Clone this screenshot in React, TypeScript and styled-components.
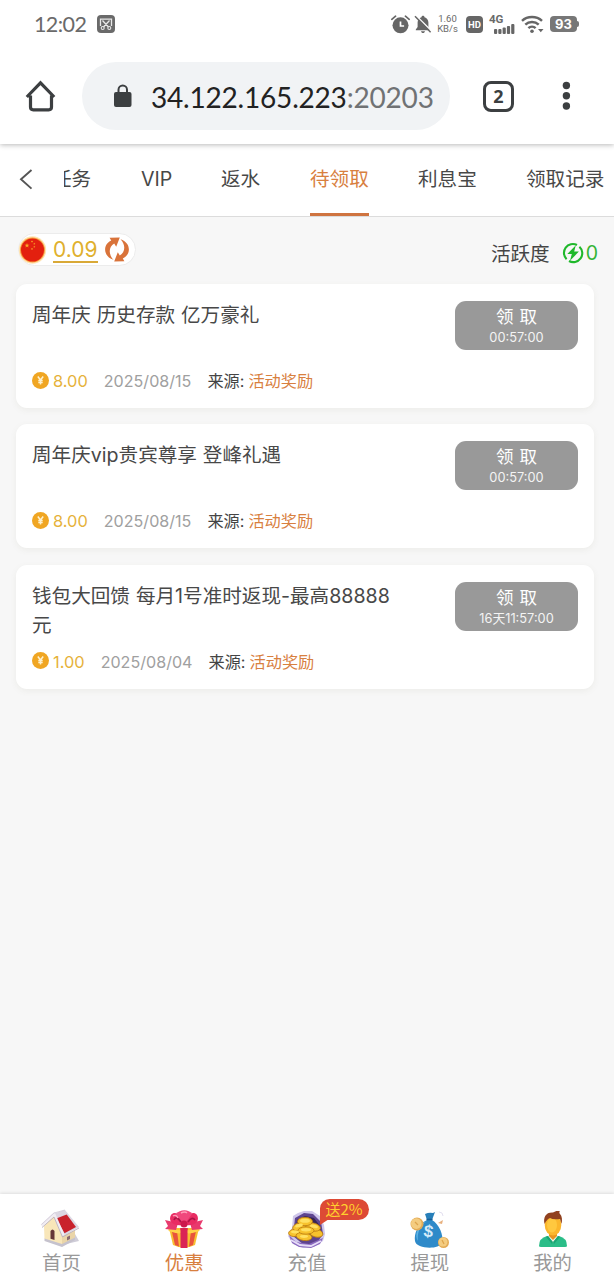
import React from 'react';
import styled, { createGlobalStyle } from 'styled-components';

const Global = createGlobalStyle`
  * { box-sizing: border-box; }
  body {
    margin: 0;
    background: #f7f7f7;
    font-family: Inter, "Noto Sans CJK SC", sans-serif;
    color: #444;
  }
  svg { display: block; flex: none; overflow: visible; }
`;

const Page = styled.div`
  width: 614px;
  height: 1280px;
  display: flex;
  flex-direction: column;
  overflow: hidden;
  background: #f7f7f7;
  white-space: nowrap;
`;

/* ---------- status bar ---------- */
const StatusBar = styled.div`
  flex: none;
  height: 48px;
  padding: 0 34px;
  display: flex;
  align-items: center;
  background: #fff;
  color: #6a6a6a;
  position: relative;
  z-index: 2;
`;
const Clock = styled.span`
  font: 400 21.5px/24px Lato, sans-serif;
  letter-spacing: -0.6px;
  width: 63px;
`;
const StatusIcons = styled.div`
  margin-left: auto;
  display: flex;
  align-items: center;
`;
const Speed = styled.div`
  width: 21px;
  margin: 0 8px 0 6px;
  font: 400 9.5px/10px Roboto, sans-serif;
  display: flex;
  flex-direction: column;
  align-items: center;
`;
const HdTag = styled.div`
  width: 17px;
  height: 17px;
  border-radius: 4px;
  background: #666;
  color: #fff;
  font: 700 9.5px/17px Roboto, sans-serif;
  text-align: center;
  margin-right: 6px;
`;
const Signal = styled.div`
  width: 27px;
  height: 19px;
  margin-right: 5px;
  font: 700 11.5px/9px Roboto, sans-serif;
  display: flex;
  flex-direction: column;
`;
const Battery = styled.div`
  width: 27px;
  height: 16px;
  margin-left: 6px;
  margin-right: 3px;
  border-radius: 4px;
  background: #777;
  color: #fff;
  font: 700 13px/16px Inter, sans-serif;
  text-align: center;
  position: relative;
  &::after {
    content: '';
    position: absolute;
    right: -2px;
    top: 5px;
    width: 2px;
    height: 6px;
    background: #777;
    border-radius: 0 2px 2px 0;
  }
`;

/* ---------- browser bar ---------- */
const BrowserBar = styled.div`
  flex: none;
  height: 96px;
  padding-left: 25px;
  display: flex;
  align-items: center;
  background: #fff;
  position: relative;
  z-index: 1;
  box-shadow: 0 1px 5px rgba(0, 0, 0, 0.28);
`;
const Address = styled.div`
  width: 368px;
  height: 68px;
  margin-left: 25px;
  padding-left: 32px;
  border-radius: 34px;
  background: #f1f3f5;
  display: flex;
  align-items: center;
`;
const Url = styled.div`
  margin-left: 19px;
  padding-top: 1px;
  font: 400 28px/36px Lato, sans-serif;
  letter-spacing: -0.2px;
  color: #222;
`;
const Port = styled.span`
  color: #707274;
`;
const TabCount = styled.div`
  width: 31px;
  height: 31px;
  margin-left: 33px;
  border: 3px solid #3c3f41;
  border-radius: 8px;
  color: #3c3f41;
  font: 700 18px/25px "Noto Sans", sans-serif;
  text-align: center;
`;

/* ---------- tabs ---------- */
const Tabs = styled.nav`
  flex: none;
  height: 73px;
  padding-left: 19px;
  display: flex;
  background: #fff;
  border-bottom: 1px solid #dcdcdc;
`;
const Back = styled.div`
  width: 45px;
  padding-top: 25px;
`;
const TabScroller = styled.div`
  flex: 1;
  overflow: hidden;
`;
const TabList = styled.div`
  display: flex;
  gap: 49px;
  height: 72px;
  margin-left: -12px;
`;
const Tab = styled.div<{ $active?: boolean; $w: number }>`
  flex: none;
  width: ${(p) => p.$w}px;
  height: 72px;
  font-size: 19.6px;
  line-height: 30px;
  padding-top: 20px;
  color: ${(p) => (p.$active ? '#d8803f' : '#484848')};
  border-bottom: 3px solid ${(p) => (p.$active ? '#cf7440' : 'transparent')};
`;

/* ---------- summary ---------- */
const Summary = styled.div`
  flex: none;
  height: 67px;
  padding: 0 16px 0 18px;
  display: flex;
  justify-content: space-between;
  align-items: flex-start;
`;
const Balance = styled.div`
  width: 118px;
  height: 33px;
  margin-top: 16px;
  border: 1px solid #ececec;
  border-radius: 17px;
  background: #fff;
  display: flex;
  align-items: center;
`;
const BalanceValue = styled.span`
  width: 45px;
  height: 27px;
  margin: 0 7px 0 6px;
  font-size: 21px;
  line-height: 27px;
  color: #dfb02d;
  border-bottom: 2px solid #d9a937;
`;
const Activity = styled.div`
  margin-top: 20px;
  display: flex;
  align-items: center;
  font-size: 19.6px;
  line-height: 30px;
`;
const ActivityLabel = styled.span`
  margin-top: 2px;
`;
const Points = styled.span`
  margin-left: 3px;
  font-size: 19.5px;
  color: #35b435;
`;

/* ---------- cards ---------- */
const CardList = styled.main`
  flex: 1;
  padding: 0 20px 0 16px;
  display: flex;
  flex-direction: column;
  gap: 16.4px;
`;
const Card = styled.article`
  flex: none;
  height: 124px;
  padding: 17px 16px 0;
  border-radius: 11px;
  background: #fff;
  box-shadow: 0 2px 6px rgba(120, 110, 80, 0.08);
  display: flex;
  justify-content: space-between;
`;
const CardTitle = styled.h2`
  margin: 0;
  height: 58px;
  width: 375px;
  font-size: 19.6px;
  font-weight: 400;
  line-height: 29px;
  word-spacing: 0.4px;
  white-space: pre-line;
  color: #484848;
`;
const Meta = styled.div`
  margin-top: 9px;
  display: flex;
  align-items: center;
  font-size: 16.2px;
  line-height: 25px;
`;
const Amount = styled.span`
  margin: 1px 16px 0 4px;
  font-size: 16.4px;
  color: #e6b23a;
`;
const DateText = styled.span`
  margin: 1px 16px 0 0;
  font-size: 16.1px;
  color: #a0a0a0;
`;
const SourceLabel = styled.span`
  margin-top: 1px;
`;
const Source = styled.span`
  margin: 1px 0 0 4px;
  color: #d8803f;
`;
const Claim = styled.button`
  width: 123px;
  height: 49px;
  border: 0;
  padding: 3px 0 0;
  border-radius: 11px;
  background: #999;
  color: #fff;
  font-family: inherit;
  display: flex;
  flex-direction: column;
  align-items: center;
`;
const ClaimLabel = styled.span`
  font-size: 17.5px;
  line-height: 26px;
  word-spacing: 1px;
`;
const Countdown = styled.span`
  font-size: 12.8px;
  line-height: 16px;
  color: #f4f4f4;
`;

/* ---------- bottom nav ---------- */
const BottomNav = styled.footer`
  flex: none;
  height: 86px;
  padding-top: 16px;
  display: grid;
  grid-template-columns: repeat(5, 1fr);
  background: #fff;
  box-shadow: 0 -1px 3px rgba(0, 0, 0, 0.1);
`;
const NavItem = styled.div<{ $active?: boolean }>`
  position: relative;
  display: flex;
  flex-direction: column;
  align-items: center;
  font-size: 19.4px;
  line-height: 26px;
  color: ${(p) => (p.$active ? '#d8803f' : '#999')};
`;
const NavLabel = styled.span`
  margin-top: 0;
`;
const Badge = styled.span`
  position: absolute;
  left: 74px;
  top: -11px;
  width: 49px;
  height: 21px;
  border-radius: 10px 11px 11px 0;
  background: #dd4a35;
  color: #ffcf2e;
  font: 400 15px/20px "Noto Sans CJK SC", sans-serif;
  text-align: center;
  &::after {
    content: '';
    position: absolute;
    left: 0;
    bottom: -5px;
    border-top: 6px solid #dd4a35;
    border-right: 9px solid transparent;
  }
`;

/* ---------- icons ---------- */
const CaptureIcon = () => (
  <svg width="18" height="18" viewBox="0 0 18 18">
    <rect width="18" height="18" rx="4" fill="#6a6a6a" />
    <path d="M3.5 11V4.2h11V11M5.5 5.5l6 6.5M12.500 5.500l-6 6.500" fill="none" stroke="#e8e8e8" strokeWidth="1.300" />
    <circle cx="5.700" cy="13" r="1.500" fill="none" stroke="#e8e8e8" strokeWidth="1.100" />
    <circle cx="12.300" cy="13" r="1.500" fill="none" stroke="#e8e8e8" strokeWidth="1.100" />
  </svg>
);
const AlarmIcon = () => (
  <svg width="19" height="19" viewBox="0 0 19 19">
    <circle cx="9.500" cy="10.300" r="8" fill="#666" />
    <path d="M.8 4.300L4.600 1.200M18.200 4.300L14.400 1.200" stroke="#666" strokeWidth="1.700" strokeLinecap="round" />
    <path d="M9.500 6.500v4.500h3.600" fill="none" stroke="#fff" strokeWidth="1.700" />
  </svg>
);
const BellOffIcon = () => (
  <svg width="16" height="19" viewBox="0 0 16 19" style={{ marginLeft: 5 }}>
    <path d="M8 .8c.9 0 1.500.6 1.500 1.400 2.400.7 3.900 2.700 3.900 5.300v4.600l1.800 2.300v.8H.8v-.8l1.800-2.300V7.500c0-2.600 1.500-4.600 3.900-5.300C6.500 1.400 7.100.8 8 .8zM6 16.200h4c-.2 1.200-1 1.800-2 1.800s-1.800-.6-2-1.800z" fill="#666" />
    <path d="M1.500.9L16.600 16" stroke="#fff" strokeWidth="1.400" />
    <path d="M0 1.300L15.600 17.200" stroke="#666" strokeWidth="1.500" />
  </svg>
);
const BarsIcon = () => (
  <svg width="27" height="10" viewBox="0 0 27 10">
    <g fill="#666">
      <rect x="5" y="5" width="3.200" height="5" rx="1" />
      <rect x="9.300" y="5" width="3.200" height="5" rx="1" />
      <rect x="13.600" y="3.500" width="3.200" height="6.500" rx="1" />
      <rect x="17.900" y="2" width="3.200" height="8" rx="1" />
      <rect x="22.200" y="0" width="3.200" height="10" rx="1" />
    </g>
  </svg>
);
const WifiIcon = () => (
  <svg width="23" height="19" viewBox="0 0 23 19">
    <g fill="none" stroke="#666" strokeWidth="2.500">
      <path d="M1 5.800c5.500-5 14.500-5 20 0" />
      <path d="M4.300 9.600c3.700-3.400 9.700-3.400 13.400 0" />
      <path d="M7.400 13.100c2-1.900 5.200-1.900 7.200 0" />
    </g>
    <circle cx="11" cy="16.200" r="1.800" fill="#666" />
    <path d="M17 14h5.500l-2.700 3.200z" fill="#666" />
  </svg>
);
const HomeIcon = () => (
  <svg width="32" height="32" viewBox="0 0 32 32">
    <path d="M1.800 17L15.500 2.800 29.200 17M5.500 15.500V27q0 2.800 2.800 2.800h15.400q2.800 0 2.800-2.800V15.500" fill="none" stroke="#3c3f41" strokeWidth="3.200" />
  </svg>
);
const LockIcon = () => (
  <svg width="18" height="24" viewBox="0 0 18 24">
    <rect x="0" y="8" width="17.500" height="15" rx="2" fill="#3c3f41" />
    <path d="M4.500 9V5.800a4.250 4.250 0 0 1 8.500 0V9" fill="none" stroke="#3c3f41" strokeWidth="2" />
  </svg>
);
const MoreIcon = () => (
  <svg width="8" height="30" viewBox="0 0 8 30" style={{ marginLeft: 48 }}>
    <g fill="#3c3f41">
      <circle cx="4.400" cy="4.500" r="3.700" />
      <circle cx="4.400" cy="14.800" r="3.700" />
      <circle cx="4.400" cy="25" r="3.700" />
    </g>
  </svg>
);
const BackIcon = () => (
  <svg width="14" height="21" viewBox="0 0 14 21">
    <path d="M12.500 1L2 10.300l10.500 9.300" fill="none" stroke="#555" strokeWidth="1.900" />
  </svg>
);
const STAR = 'M0-1l.24.68.72.01-.58.43.21.69L0 .4l-.59.41.21-.69-.58-.43.72-.01z';
const FlagIcon = () => (
  <svg width="28" height="28" viewBox="0 0 28 28">
    <circle cx="13.500" cy="14" r="13.700" fill="#ffe3b0" />
    <circle cx="13.500" cy="14" r="12.500" fill="#f79a3a" />
    <circle cx="13.500" cy="14" r="11.500" fill="#e3200f" />
    <g fill="#f9a928">
      <path d={STAR} transform="translate(8 9.500) scale(2.600)" />
      <path d={STAR} transform="translate(13 5.500) scale(1.200)" />
      <path d={STAR} transform="translate(15.300 7.800) scale(1.200)" />
      <path d={STAR} transform="translate(15.300 10.800) scale(1.200)" />
      <path d={STAR} transform="translate(13 13) scale(1.200)" />
    </g>
  </svg>
);
const ARROW = 'M8.500 22.800C-2 19.500-2.500 7.500 6.200 3.600L4.600.8l10.200-.2-3.600 9.200-2-3.200C3.800 9.800 3 17 8.500 22.800z';
const RefreshIcon = () => (
  <svg width="24" height="25" viewBox="0 0 24 25">
    <g fill="#d9733a">
      <path d={ARROW} />
      <path d={ARROW} transform="rotate(180 12 12.500)" />
    </g>
  </svg>
);
const EnergyIcon = () => (
  <svg width="20" height="20" viewBox="0 0 20 20" style={{ marginLeft: 13 }}>
    <g fill="none" stroke="#1fb82b" strokeWidth="2.100">
      <path d="M14 2A8.900 8.900 0 0 0 3.600 16.200" />
      <path d="M16.400 3.700A8.900 8.900 0 0 1 6 18" />
    </g>
    <path d="M12.800 2.300L4.300 11h4.500L7 17.800l8.900-9.200h-4.700z" fill="#1fb82b" />
  </svg>
);
const CoinIcon = () => (
  <svg width="17" height="17" viewBox="0 0 17 17" style={{ marginTop: -2 }}>
    <circle cx="8.500" cy="8.500" r="8.500" fill="#f0a623" />
    <path d="M5.800 4.500l2.700 3.500 2.700-3.500M8.500 8v4.500M6.300 8.500h4.400M6.300 10.500h4.400" fill="none" stroke="#fff2cf" strokeWidth="1.500" />
  </svg>
);

const HouseIcon = () => (
  <svg width="40" height="40" viewBox="0 0 40 40">
    <path d="M21 35l17-4-4-7-12 4z" fill="#cfcdd8" />
    <path d="M3 16L13 6l8 20v9L3.500 29z" fill="#f8e6b9" />
    <path d="M21 26l13-6v8l-13 7z" fill="#ead5a8" />
    <path d="M3.500 28.500L21 34l13-6.500V30l-13 7-17.500-6z" fill="#c5c2cd" />
    <path d="M13 3.500L24 0l14 17-16 9.500z" fill="#dcd7e2" />
    <path d="M15.200 8.500l10.500-4L35 17l-11.500 6.300z" fill="#c9222c" />
    <path d="M.5 15.500L13 4l9.500 21.500" fill="none" stroke="#f1edf3" strokeWidth="2.600" />
    <path d="M.5 14.500L13 3l11-3" fill="none" stroke="#cdc7d4" strokeWidth=".8" />
    <path d="M1 17.500L13 7l8.500 20L38 18" fill="none" stroke="#b9b0bf" strokeWidth=".9" />
    <path d="M9.500 21q2-3 4 0v9l-4-1.300z" fill="#653637" />
    <path d="M26 27l3-1.500V29l-3 1.500z" fill="#8a6a70" />
  </svg>
);
const GiftIcon = () => (
  <svg width="40" height="40" viewBox="0 0 40 40">
    <path d="M5 18l4 17q11 5 22 0l4-17z" fill="#f8bf32" />
    <path d="M8 22l3 13 4 1.500L13 21zM27 21l-2 15.500 4-1.500 3-14z" fill="#e8543c" />
    <path d="M16.500 18h7v20h-7z" fill="#da2455" />
    <path d="M4 17q16 7 32 0l-.7 4q-15 6-30.600 0z" fill="#ffd24a" />
    <path d="M16.500 18h7v6h-7z" fill="#da2455" />
    <path d="M1 10l13 3-2 7-11-1 3-3zM39 10l-13 3 2 7 11-1-3-3z" fill="#e83a6d" />
    <path d="M19 15C8 17 4 10 7 5c4-5 11 0 13 8 2-8 9-13 13-8 3 5-1 12-12 10z" fill="#e92c63" />
    <path d="M12 4c4-5 13-5 16 0l-8 11z" fill="#f0477c" />
    <path d="M10 10q2-5 7 2M24 12q4-6 7-2" fill="none" stroke="#ac1447" strokeWidth="1.700" />
    <path d="M9 6q3-2 5 2M17 3q4-2 6 0" fill="none" stroke="#ff9cb9" strokeWidth="1.400" />
    <circle cx="20" cy="14" r="3.500" fill="#cb174d" />
  </svg>
);
const TreasureIcon = () => (
  <svg width="40" height="40" viewBox="0 0 40 40">
    <path d="M6 6l5-3 6-2 8 0 8 5 4 9 1 9-2 7-9 6-11 1-10-4-5-8 4-8z" fill="#cfc6ea" />
    <path d="M8 8l9-5 9 1 8 8 2 12-6 9-13 2-11-9z" fill="#5e448f" />
    <path d="M10 10l8-4 9 2 6 8 1 10H8z" fill="#372554" />
    <path d="M2 25l7 7 13 2 14-6-3 6-9 4-12-1-7-4z" fill="#8a69bf" />
    <path d="M4 30l9 5 11 1 10-5" fill="none" stroke="#e6dcf8" strokeWidth="1.800" />
    <g fill="#f7c22d" stroke="#b97a12" strokeWidth=".8">
      <ellipse cx="9" cy="22.500" rx="7.500" ry="4" transform="rotate(-8 9 22.500)" />
      <ellipse cx="29" cy="23" rx="7" ry="4" transform="rotate(14 29 23)" />
      <ellipse cx="13" cy="16.500" rx="7.500" ry="4" transform="rotate(-16 13 16.500)" />
      <ellipse cx="26" cy="17" rx="7.500" ry="4" transform="rotate(12 26 17)" />
      <ellipse cx="18" cy="11.500" rx="7.500" ry="4.200" />
      <ellipse cx="17" cy="26.500" rx="8" ry="4" transform="rotate(8 17 26.500)" />
      <ellipse cx="19" cy="20.500" rx="8" ry="3.700" />
    </g>
    <g fill="#ffe163">
      <ellipse cx="18" cy="10.700" rx="5" ry="2" />
      <ellipse cx="12" cy="15.500" rx="4" ry="1.600" transform="rotate(-16 12 15.500)" />
      <ellipse cx="27" cy="16.300" rx="4" ry="1.600" transform="rotate(12 27 16.300)" />
      <ellipse cx="19" cy="19.800" rx="5" ry="1.700" />
      <ellipse cx="8" cy="21.800" rx="4" ry="1.600" />
      <ellipse cx="17" cy="26.500" rx="4" ry="1.400" />
    </g>
  </svg>
);
const MoneyBagIcon = () => (
  <svg width="40" height="40" viewBox="0 0 40 40">
    <path d="M17 10C7 15 4 24 5 31c1 8 24 9 27 2 2-8-3-19-10-23z" fill="#2e8ac9" />
    <path d="M17 11C9 16 7 24 8 31c-4-5-1-16 9-20z" fill="#5cb3e5" />
    <path d="M15 4q4-2 8-1l2-1-3 8h-5z" fill="#277fb9" />
    <path d="M16.500 9.500h6" stroke="#175f98" strokeWidth="1.600" />
    <g fill="#e3ab55">
      <circle cx="7" cy="14" r="6.500" />
      <circle cx="33.500" cy="32.500" r="5.500" />
    </g>
    <g fill="#f4cc80">
      <circle cx="6.300" cy="13.600" r="5.300" />
      <circle cx="33" cy="32" r="4.500" />
    </g>
    <path d="M5 12l3 3M32 30l2 4" stroke="#dda54d" strokeWidth="1.300" />
    <path d="M28 13l5-3-1 4z" fill="#e7b07e" />
    <path d="M29 2l3 1 1 3" fill="none" stroke="#e3e0f0" strokeWidth="1" />
    <text x="18.500" y="27" textAnchor="middle" fontFamily="Liberation Sans, sans-serif" fontWeight="700" fontSize="17" fill="#d6ebf9" transform="rotate(8 18 22)">$</text>
  </svg>
);
const PersonIcon = () => (
  <svg width="40" height="40" viewBox="0 0 40 40">
    <path d="M6 36q0-8 8-10h12q8 2 8 10 0 1-2 1H8q-2 0-2-1z" fill="#2bbd88" />
    <path d="M15 26l5 7 5-7-2-3h-6z" fill="#f3f3e6" />
    <path d="M16 22h8v4l-4 4-4-4z" fill="#e8951e" />
    <path d="M15 26l-2 1 6 7 1-2zM25 26l2 1-6 7-1-2z" fill="#1ba574" />
    <ellipse cx="20" cy="15" rx="8.300" ry="10.500" fill="#fbb62c" />
    <ellipse cx="19" cy="15" rx="5" ry="7.500" fill="#ffc83f" />
    <path d="M11.500 14C10 7 13 2 20 2.500c2-1 4-2 7-1-1 1-1 1.500 0 2.500 2 2 2.500 6 1.500 10l-1.500-5q-7 1-10-1-3 1-5.500 6z" fill="#91411f" />
  </svg>
);

const rewards = [
  { title: '周年庆 历史存款 亿万豪礼', amount: '8.00', date: '2025/08/15', left: '00:57:00' },
  { title: '周年庆vip贵宾尊享 登峰礼遇', amount: '8.00', date: '2025/08/15', left: '00:57:00' },
  { title: '钱包大回馈 每月1号准时返现-最高88888\n元', amount: '1.00', date: '2025/08/04', left: '16天11:57:00' },
];

const tabs = [
  { label: '任务', w: 40 },
  { label: 'VIP', w: 31 },
  { label: '返水', w: 40 },
  { label: '待领取', w: 59, active: true },
  { label: '利息宝', w: 59 },
  { label: '领取记录', w: 79 },
];

const navItems = [
  { label: '首页', Icon: HouseIcon },
  { label: '优惠', Icon: GiftIcon, active: true },
  { label: '充值', Icon: TreasureIcon, badge: '送2%' },
  { label: '提现', Icon: MoneyBagIcon },
  { label: '我的', Icon: PersonIcon },
];

export default function App() {
  return (
    <Page>
      <Global />
      <StatusBar>
        <Clock>12:02</Clock>
        <CaptureIcon />
        <StatusIcons>
          <AlarmIcon />
          <BellOffIcon />
          <Speed>
            <span>1.60</span>
            <span>KB/s</span>
          </Speed>
          <HdTag>HD</HdTag>
          <Signal>
            4G
            <BarsIcon />
          </Signal>
          <WifiIcon />
          <Battery>93</Battery>
        </StatusIcons>
      </StatusBar>
      <BrowserBar>
        <HomeIcon />
        <Address>
          <LockIcon />
          <Url>
            34.122.165.223<Port>:20203</Port>
          </Url>
        </Address>
        <TabCount>2</TabCount>
        <MoreIcon />
      </BrowserBar>
      <Tabs>
        <Back>
          <BackIcon />
        </Back>
        <TabScroller>
          <TabList>
            {tabs.map((t) => (
              <Tab key={t.label} $w={t.w} $active={t.active}>
                {t.label}
              </Tab>
            ))}
          </TabList>
        </TabScroller>
      </Tabs>
      <Summary>
        <Balance>
          <FlagIcon />
          <BalanceValue>0.09</BalanceValue>
          <RefreshIcon />
        </Balance>
        <Activity>
          <ActivityLabel>活跃度</ActivityLabel>
          <EnergyIcon />
          <Points>0</Points>
        </Activity>
      </Summary>
      <CardList>
        {rewards.map((r) => (
          <Card key={r.title}>
            <div>
              <CardTitle>{r.title}</CardTitle>
              <Meta>
                <CoinIcon />
                <Amount>{r.amount}</Amount>
                <DateText>{r.date}</DateText>
                <SourceLabel>来源:</SourceLabel>
                <Source>活动奖励</Source>
              </Meta>
            </div>
            <Claim>
              <ClaimLabel>领 取</ClaimLabel>
              <Countdown>{r.left}</Countdown>
            </Claim>
          </Card>
        ))}
      </CardList>
      <BottomNav>
        {navItems.map(({ label, Icon, active, badge }) => (
          <NavItem key={label} $active={active}>
            <Icon />
            <NavLabel>{label}</NavLabel>
            {badge && <Badge>{badge}</Badge>}
          </NavItem>
        ))}
      </BottomNav>
    </Page>
  );
}
